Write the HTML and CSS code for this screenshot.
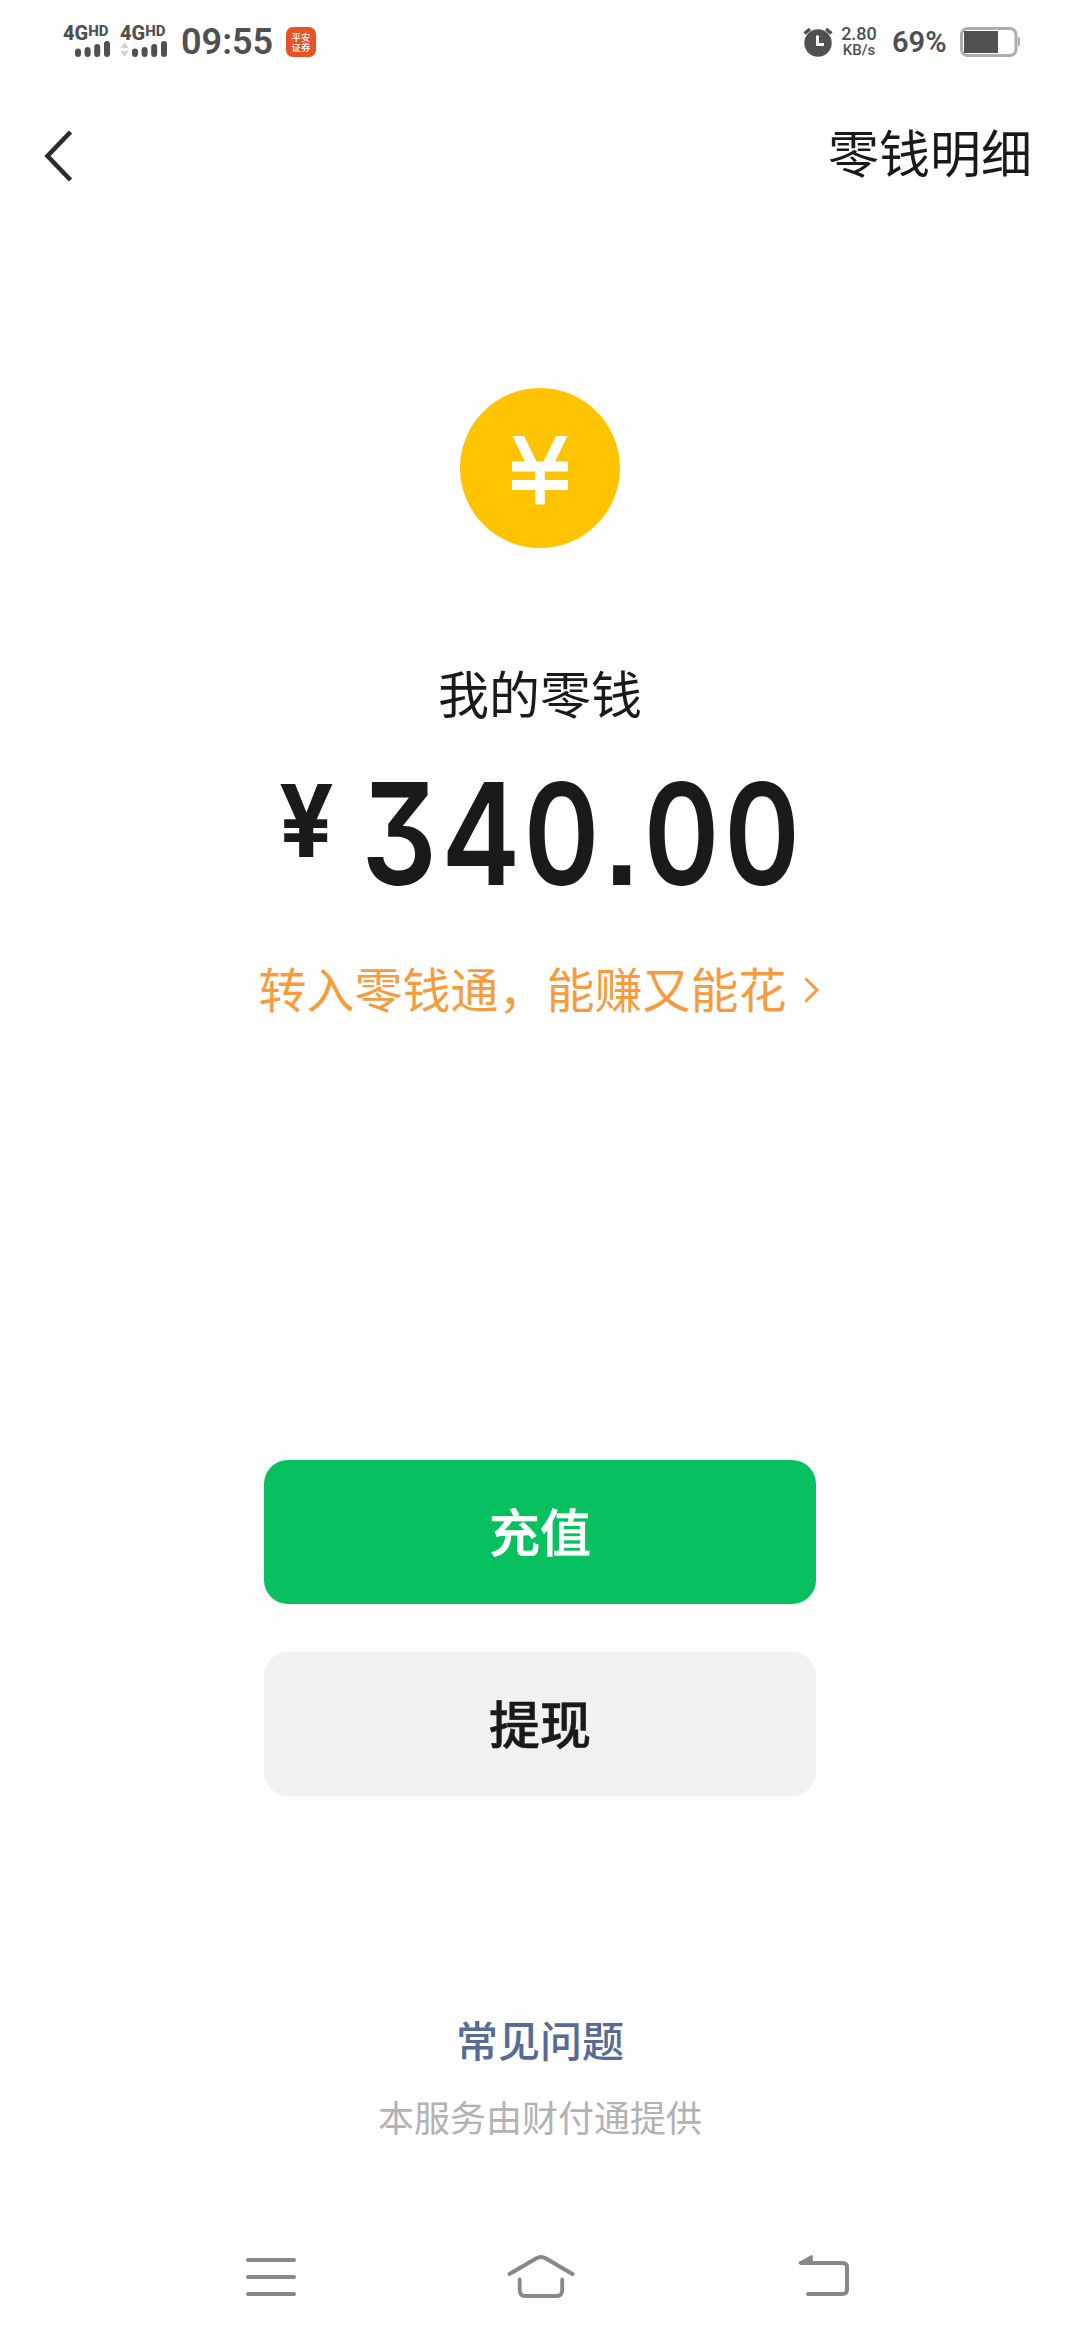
FILE: index.html
```html
<!DOCTYPE html>
<html lang="zh-CN">
<head>
<meta charset="utf-8">
<title>零钱</title>
<link rel="stylesheet" href="styles.css">
</head>
<body>
<div class="screen">
  <header class="status">
    <div class="signal">
      <div class="net">4G<span class="hd">HD</span></div>
      <svg class="bars" width="48" height="18" viewBox="0 0 48 18"><path d="M15 11.500V14M24.600 10V14M34.200 7V14M44 4V14" stroke="#505050" stroke-width="6" stroke-linecap="round"/></svg>
    </div>
    <div class="signal">
      <div class="net">4G<span class="hd">HD</span></div>
      <svg class="bars" width="48" height="18" viewBox="0 0 48 18"><path d="M.5 8 4.500 2 8.500 8zM.5 11h8L4.500 17z" fill="#d2d2d2"/><path d="M15 11.500V14M24.600 10V14M34.200 7V14M44 4V14" stroke="#505050" stroke-width="6" stroke-linecap="round"/></svg>
    </div>
    <div class="time">09:55</div>
    <div class="app"><span>平安</span><span>证券</span></div>
    <svg class="alarm" width="30" height="30" viewBox="0 0 30 30"><circle cx="15" cy="16" r="13.700" fill="#505050"/><path d="M1.500 6.500 7 2M28.500 6.500 23 2" stroke="#505050" stroke-width="3.400"/><path d="M14.500 8.500V17.500H21" fill="none" stroke="#fefefe" stroke-width="3"/></svg>
    <div class="speed"><span class="rate">2.80</span><span class="unit">KB/s</span></div>
    <div class="percent">69%</div>
    <svg class="battery" width="60" height="30" viewBox="0 0 60 30"><rect x="1.500" y="1.500" width="54.500" height="27" rx="6" fill="none" stroke="#adadad" stroke-width="3"/><path d="M4 4h34v22H4z" fill="#505050"/><path d="M58 10h1q1 0 1 1v7q0 1-1 1H58z" fill="#adadad"/></svg>
  </header>

  <nav class="topbar">
    <svg class="back" width="30" height="54" viewBox="0 0 30 54"><path d="M26.500 3 3.500 27l23 24" fill="none" stroke="#2c2c2c" stroke-width="4.600"/></svg>
    <span class="detail">零钱明细</span>
  </nav>

  <main class="wallet">
    <svg class="coin" width="160" height="160" viewBox="0 0 160 160"><circle cx="80" cy="80" r="80" fill="#ffc300"/><path d="M52.500 48H64L76.500 73.500H83.500L96 48H107.500L95 73.500H108V83.500H84.800V92H108V102H84.800V116.500H75.300V102H52V92H75.300V83.500H52V73.500H65z" fill="#fff"/></svg>
    <h1 class="label">我的零钱</h1>
    <div class="amount"><span class="yen">¥</span><span class="digits">340<span class="dot">.</span>00</span></div>
    <a class="promo">转入零钱通，能赚又能花<svg class="more" width="18" height="26" viewBox="0 0 18 26"><path d="M1.500 1.500 13 13 1.500 24.500" fill="none" stroke="#f59d3e" stroke-width="3"/></svg></a>
    <div class="actions">
      <button class="btn btn-primary">充值</button>
      <button class="btn btn-plain">提现</button>
    </div>
    <a class="faq">常见问题</a>
    <p class="provider">本服务由财付通提供</p>
  </main>

  <footer class="system">
    <svg width="52" height="50" viewBox="0 0 52 50"><path d="M3 8H49M3 25H49M3 42H49" stroke="#888" stroke-width="4" stroke-linecap="round"/></svg>
    <svg class="home" width="72" height="50" viewBox="0 0 72 50"><path d="M4.500 22 31 6.500q5-3 10 0L67.500 22" fill="none" stroke="#888" stroke-width="4" stroke-linecap="round"/><path d="M14.700 27.500V38q0 6 5.500 6H51.700q5.500 0 5.500-6V27.500" fill="none" stroke="#888" stroke-width="3.800" stroke-linecap="round"/></svg>
    <svg width="52" height="50" viewBox="0 0 52 50"><path d="M4 11H45.500q4.500 0 4.500 4.500V37.500q0 4.500-4.500 4.500H11" fill="none" stroke="#888" stroke-width="4" stroke-linecap="round"/><path d="M2 10 14 3.200q1.800-.8 1.800 1V12H3q-2.500-.5-1-2z" fill="#888"/></svg>
  </footer>
</div>
</body>
</html>
```
FILE: styles.css
```css
* { box-sizing: border-box; }
body { margin: 0; background: #fefefe; }
.screen {
  width: 1080px;
  height: 2340px;
  display: flex;
  flex-direction: column;
  background: #fefefe;
  color: #1a1a1a;
  font-family: "Noto Sans CJK SC", sans-serif;
  overflow: hidden;
}
svg { display: block; flex: none; overflow: visible; }

.status {
  height: 84px;
  flex: none;
  display: flex;
  align-items: center;
  padding: 0 60px 0 63px;
  color: #505050;
  font-family: Roboto, sans-serif;
  white-space: nowrap;
}
.signal { width: 48px; height: 36px; margin-right: 9px; }
.net { display: flex; align-items: flex-start; height: 16px; font-size: 20px; line-height: 18px; font-weight: 800; }
.hd { font-size: 15px; line-height: 14px; }
.time { width: 96px; margin-left: 4px; font-size: 36px; line-height: 84px; font-weight: 600; }
.app {
  width: 30px;
  height: 30px;
  margin-left: 9px;
  border-radius: 7px;
  background: #ea5128;
  color: #fff;
  display: flex;
  flex-direction: column;
  align-items: center;
  justify-content: center;
  font: 500 9.5px/10px "Noto Sans CJK SC", sans-serif;
}
.alarm { margin-left: auto; }
.speed { width: 36px; margin-left: 8px; display: flex; flex-direction: column; align-items: center; font-weight: 500; }
.rate { font-size: 18px; line-height: 16px; }
.unit { font-size: 15px; line-height: 16px; }
.percent { width: 55px; margin-left: 15px; font-size: 29px; font-weight: 600; }
.battery { margin-left: 13px; }

.topbar {
  height: 144px;
  flex: none;
  display: flex;
  align-items: center;
  justify-content: space-between;
  padding: 0 48px 0 44px;
}
.detail { padding-bottom: 10px; font-size: 51px; line-height: 76px; }

.wallet { flex: none; display: flex; flex-direction: column; align-items: center; padding-top: 160px; }
.label { margin: 106px 0 0; font-size: 51px; line-height: 76px; font-weight: 400; height: 76px; }
.amount { display: flex; width: 522px; height: 152px; margin-top: 44px; font-family: Inter, sans-serif; }
.yen { flex: none; width: 83px; font-size: 100px; line-height: 93px; font-weight: 700; transform: scaleX(.96); transform-origin: 0 0; }
.digits {
  flex: none;
  font-size: 141px;
  line-height: 120px;
  font-weight: 600;
  letter-spacing: 4.8px;
  font-feature-settings: "cv09", "tnum", "ss07";
  transform: scaleX(.84);
  transform-origin: 0 0;
}
.dot { margin: 0 2px; }
.promo { display: flex; align-items: center; margin-top: 25px; font-size: 48px; line-height: 72px; color: #f59d3e; }
.more { margin: 6px 0 0 17px; }
.actions { display: flex; flex-direction: column; gap: 48px; margin-top: 437px; }
.btn {
  width: 552px;
  height: 144px;
  border: 0;
  border-radius: 24px;
  padding: 0 0 4px;
  font: 500 51px/76px "Noto Sans CJK SC", sans-serif;
  -webkit-text-stroke: .6px currentColor;
}
.btn-primary { background: #07c160; color: #fff; }
.btn-plain { background: #f1f1f1; color: #1a1a1a; }
.faq { margin-top: 212px; font-size: 42px; line-height: 62px; font-weight: 500; color: #576b95; }
.provider { margin: 19px 0 0; font-size: 36px; line-height: 54px; color: #b2b2b2; }

.system {
  height: 88px;
  margin-top: auto;
  flex: none;
  display: flex;
  justify-content: space-between;
  padding: 0 231px 0 245px;
}
.home { margin-right: 12px; }
```
